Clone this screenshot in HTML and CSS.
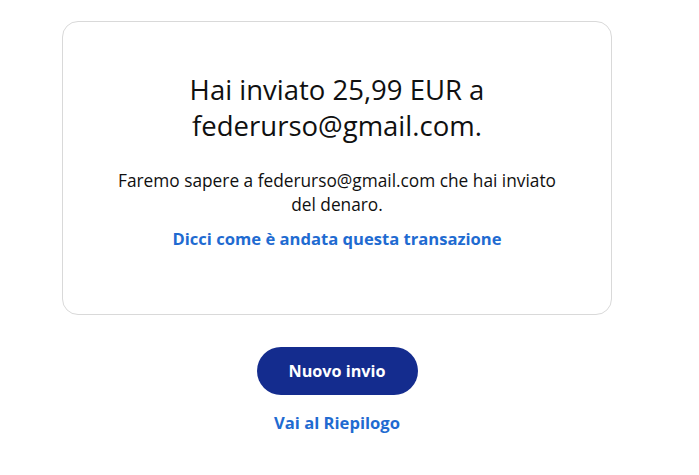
FILE: index.html
```html
<!DOCTYPE html>
<html lang="it">
<head>
<meta charset="utf-8">
<link rel="stylesheet" href="styles.css">
</head>
<body>
<main class="page">
  <section class="card">
    <h1 class="title">Hai inviato 25,99 EUR a<br>federurso@gmail.com.</h1>
    <p class="note">Faremo sapere a federurso@gmail.com che hai inviato<br>del denaro.</p>
    <a class="link" href="#">Dicci come è andata questa transazione</a>
  </section>
  <div class="actions">
    <button class="btn" type="button">Nuovo invio</button>
    <a class="link" href="#">Vai al Riepilogo</a>
  </div>
</main>
</body>
</html>
```
FILE: styles.css
```css
html, body {
  margin: 0;
  padding: 0;
  background: #ffffff;
}
body {
  font-family: "Open Sans", Lato, sans-serif;
  color: #101010;
}
.page {
  width: 550px;
  margin-left: 62px;
  padding-top: 21px;
}
.card {
  box-sizing: border-box;
  height: 294px;
  border: 1px solid #d9d9d9;
  border-radius: 16px;
  padding: 50px 20px 0;
  display: flex;
  flex-direction: column;
  align-items: center;
  text-align: center;
}
.title {
  margin: 0;
  font-size: 27.5px;
  line-height: 36px;
  font-weight: 400;
}
.note {
  margin: 25px 0 0;
  font-size: 17.3px;
  line-height: 24px;
}
.link {
  color: #1f6bd1;
  font-weight: 700;
  font-size: 16.6px;
  line-height: 24px;
  text-decoration: none;
}
.card .link {
  margin-top: 10px;
}
.actions {
  display: flex;
  flex-direction: column;
  align-items: center;
  padding-top: 32px;
}
.btn {
  width: 161px;
  height: 48px;
  border: 0;
  border-radius: 24px;
  background: #142c8e;
  color: #ffffff;
  font-family: "Open Sans", Lato, sans-serif;
  font-weight: 700;
  font-size: 16.2px;
}
.actions .link {
  margin-top: 16px;
}
```
